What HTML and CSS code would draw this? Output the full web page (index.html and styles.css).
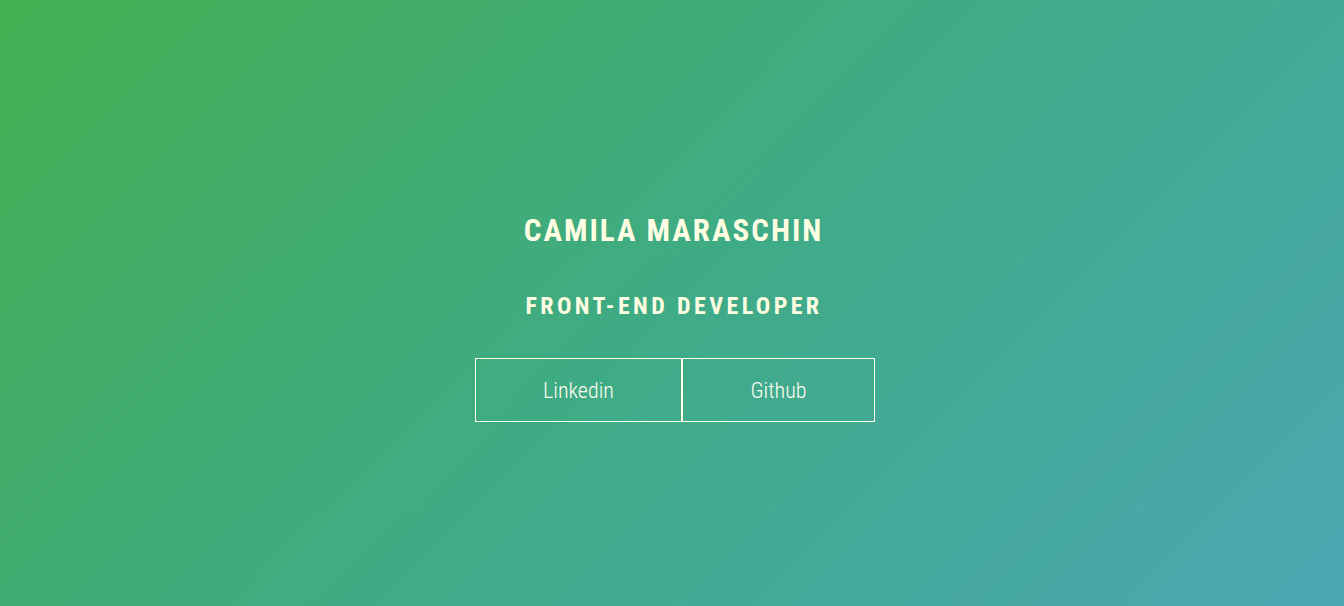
FILE: index.html
```html
<!DOCTYPE html>
<html lang="en">
<head>
<meta charset="utf-8">
<title>Camila Maraschin</title>
<link rel="stylesheet" href="styles.css">
</head>
<body>
<main class="hero">
  <h1 class="name">Camila Maraschin</h1>
  <h2 class="role">Front-end developer</h2>
  <nav class="links">
    <a class="link link-linkedin" href="#">Linkedin</a>
    <a class="link link-github" href="#">Github</a>
  </nav>
</main>
</body>
</html>
```
FILE: styles.css
```css
html, body {
  margin: 0;
  padding: 0;
  height: 100%;
}
body {
  background: linear-gradient(135deg, #44af51 0%, #3fab86 50%, #4ba7b3 100%);
  font-family: "Roboto Condensed", "DejaVu Sans Condensed", "Liberation Sans", sans-serif;
  color: #fffde2;
}
.hero {
  height: 100%;
  box-sizing: border-box;
  padding-top: 26px;
  display: flex;
  flex-direction: column;
  align-items: center;
  justify-content: center;
}
.name {
  margin: 1px 0 0 3px;
  font-size: 31px;
  line-height: 40px;
  font-weight: bold;
  letter-spacing: 2px;
  text-transform: uppercase;
}
.role {
  margin: 39px 0 0 4px;
  font-size: 24px;
  line-height: 32px;
  font-weight: bold;
  letter-spacing: 3.4px;
  text-transform: uppercase;
}
.links {
  margin-top: 36px;
  margin-left: 6px;
  display: flex;
  border: 1px solid #fffde2;
}
.link {
  display: flex;
  align-items: center;
  justify-content: center;
  height: 62px;
  color: #fffef0;
  text-decoration: none;
  font-size: 22px;
  font-weight: 300;
}
.link-linkedin {
  width: 205px;
  border-right: 2px solid #fffde2;
}
.link-github {
  width: 191px;
}
```
